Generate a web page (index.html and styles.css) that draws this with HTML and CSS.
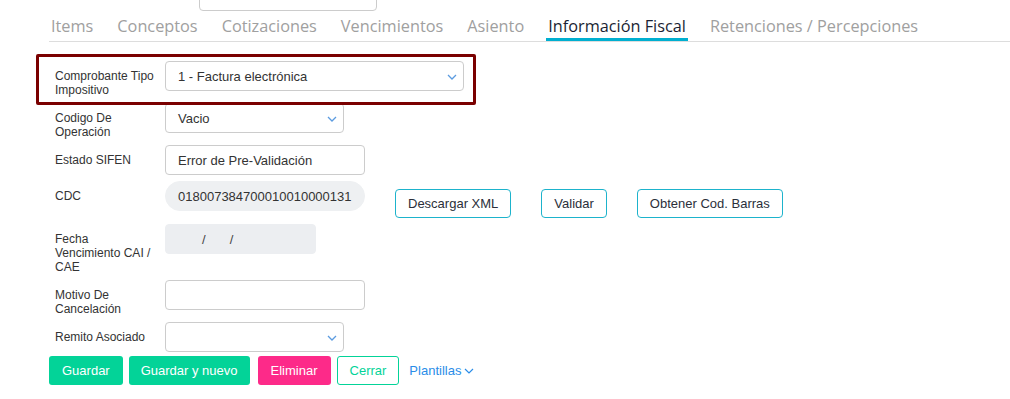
FILE: index.html
```html
<!DOCTYPE html>
<html lang="es">
<head>
    <meta charset="UTF-8">
    <meta name="viewport" content="width=device-width, initial-scale=1.0">
    <title>Información Fiscal</title>
    <link rel="stylesheet" href="styles.css">
</head>
<body>
<div class="page">

    <!-- fila anterior, cortada por el scroll -->
    <div class="prev-row">
        <span class="prev-label">Presubmit</span>
        <div class="prev-select"></div>
    </div>

    <!-- pestañas -->
    <div class="tabs">
        <span class="tab">Items</span>
        <span class="tab">Conceptos</span>
        <span class="tab">Cotizaciones</span>
        <span class="tab">Vencimientos</span>
        <span class="tab">Asiento</span>
        <span class="tab active">Información Fiscal</span>
        <span class="tab">Retenciones / Percepciones</span>
    </div>

    <div class="form">
        <div class="row highlighted">
            <label class="lbl">Comprobante Tipo Impositivo</label>
            <div class="field select wide">
                <span>1 - Factura electrónica</span>
                <svg class="chev" width="10" height="6" viewBox="0 0 10 6"><path d="M1 1l4 4 4-4" fill="none" stroke="#5b9be0" stroke-width="1.3"/></svg>
            </div>
            <span class="hl-box"></span>
        </div>

        <div class="row">
            <label class="lbl">Codigo De Operación</label>
            <div class="field select mid">
                <span>Vacio</span>
                <svg class="chev" width="10" height="6" viewBox="0 0 10 6"><path d="M1 1l4 4 4-4" fill="none" stroke="#5b9be0" stroke-width="1.3"/></svg>
            </div>
        </div>

        <div class="row">
            <label class="lbl">Estado SIFEN</label>
            <div class="field std"><span>Error de Pre-Validación</span></div>
        </div>

        <div class="row">
            <label class="lbl">CDC</label>
            <div class="field std pill"><span>018007384700010010000131</span></div>
            <div class="cdc-actions">
                <button class="btn-outline">Descargar XML</button>
                <button class="btn-outline">Validar</button>
                <button class="btn-outline">Obtener Cod. Barras</button>
            </div>
        </div>

        <div class="row">
            <label class="lbl">Fecha Vencimiento CAI / CAE</label>
            <div class="field date"><span class="slash">/</span><span class="slash">/</span></div>
        </div>

        <div class="row">
            <label class="lbl">Motivo De Cancelación</label>
            <div class="field std"></div>
        </div>

        <div class="row last">
            <label class="lbl">Remito Asociado</label>
            <div class="field select mid">
                <span></span>
                <svg class="chev" width="10" height="6" viewBox="0 0 10 6"><path d="M1 1l4 4 4-4" fill="none" stroke="#5b9be0" stroke-width="1.3"/></svg>
            </div>
        </div>
    </div>

    <div class="footer">
        <button class="btn green">Guardar</button>
        <button class="btn green wide-gap">Guardar y nuevo</button>
        <button class="btn pink">Eliminar</button>
        <button class="btn ghost">Cerrar</button>
        <span class="templates">Plantillas
            <svg width="10" height="6" viewBox="0 0 10 6"><path d="M1 1l4 4 4-4" fill="none" stroke="#2a8de8" stroke-width="1.2"/></svg>
        </span>
    </div>

</div>
</body>
</html>
```

FILE: styles.css
```css
/* base */
body {
    margin: 0;
    background: #fff;
    font-family: "Liberation Sans", Arial, sans-serif;
    color: #333;
    overflow: hidden;
}

.page {
    padding-left: 49px;
}

/* fila superior cortada */
.prev-row {
    display: flex;
    margin-top: -20px;
    height: 31px;
}

.prev-label {
    font-size: 12px;
    padding: 8px 0 0 2px;
    width: 148px;
    color: #333;
}

.prev-select {
    width: 176px;
    height: 29px;
    border: 1px solid #ccc;
    border-radius: 4px;
}

/* pestañas */
.tabs {
    display: flex;
    gap: 20px;
    border-bottom: 1px solid #ddd;
    font-family: "Open Sans", "Noto Sans", sans-serif;
    font-size: 16.3px;
}

.tab {
    color: #a0a0a0;
    padding: 4px 2px 1px;
    line-height: 22px;
    border-bottom: 3px solid transparent;
    white-space: nowrap;
}

.tab.active {
    color: #1b1f33;
    border-bottom-color: #00afd0;
}

/* formulario */
.form {
    padding: 19px 0 0 6px;
}

.row {
    display: flex;
    align-items: flex-start;
    margin-bottom: 6px;
}

.row.last {
    margin-bottom: 4px;
}

.row.highlighted {
    position: relative;
}

.hl-box {
    position: absolute;
    left: -19px;
    top: -7px;
    width: 434px;
    height: 45px;
    border: 3px solid #7a0000;
    border-radius: 2px;
    pointer-events: none;
}

.lbl {
    width: 100px;
    padding: 8px 10px 0 0;
    font-size: 12px;
    line-height: 14px;
    color: #333;
}

.field {
    height: 30px;
    box-sizing: border-box;
    border: 1px solid #ccc;
    border-radius: 4px;
    display: flex;
    align-items: center;
    padding: 0 12px;
    font-size: 13px;
    color: #333;
    background: #fff;
}

.field.std { width: 200px; }
.field.mid { width: 179px; }
.field.wide { width: 299px; }

.select {
    justify-content: space-between;
    padding-right: 6px;
}

.chev {
    margin-top: 2px;
}

.pill {
    background: #eef0f2;
    border-color: #eef0f2;
    border-radius: 15px;
}

.date {
    width: 151px;
    background: #eceef1;
    border-color: #eceef1;
    padding-left: 36px;
    gap: 24px;
}

.slash {
    color: #444;
}

.cdc-actions {
    display: flex;
    gap: 30px;
    margin: 8px 0 0 30px;
}

.btn-outline {
    height: 29px;
    padding: 0 12px;
    border: 1px solid #1db3cc;
    border-radius: 4px;
    background: #fff;
    font-family: "Liberation Sans", Arial, sans-serif;
    font-size: 13px;
    color: #2b2f3a;
}

/* botones inferiores */
.footer {
    display: flex;
    align-items: center;
    gap: 6px;
}

.btn {
    height: 29px;
    padding: 0 12px;
    border: 1px solid transparent;
    border-radius: 3px;
    font-family: "Liberation Sans", Arial, sans-serif;
    font-size: 13px;
    color: #fff;
}

.btn.wide-gap { padding: 0 11px; }

.btn.green { background: #03d398; }
.btn.pink { background: #fd2a89; margin-left: 2px; }

.btn.ghost {
    background: #fff;
    border-color: #03d398;
    color: #03d398;
}

.templates {
    margin-left: 4px;
    font-size: 13px;
    color: #2a8de8;
    display: flex;
    align-items: center;
    gap: 3px;
}
```
